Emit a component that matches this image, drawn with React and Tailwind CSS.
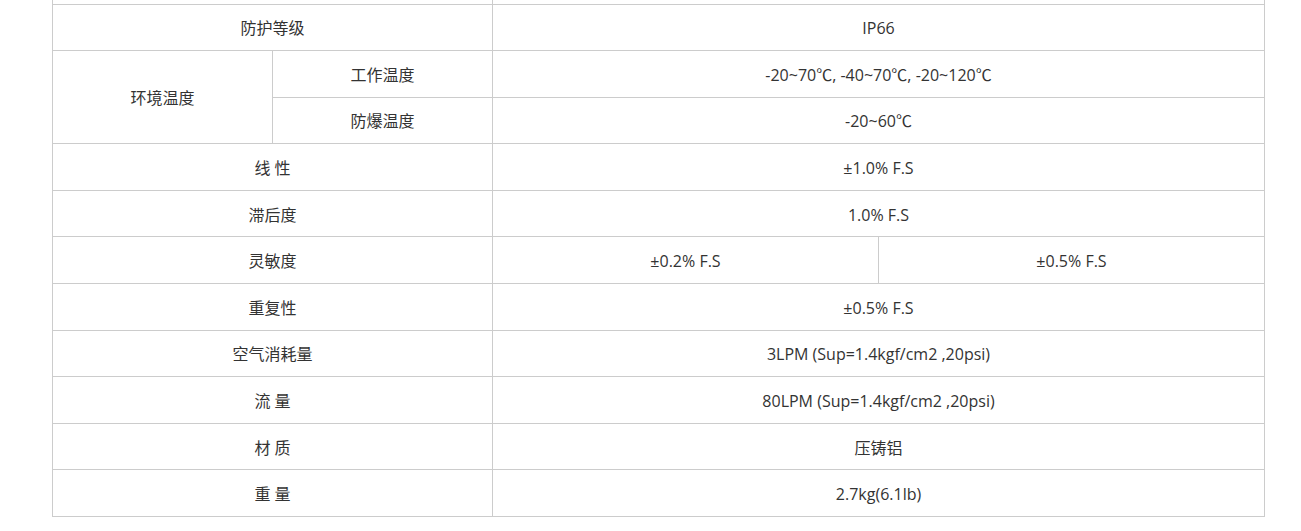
import React from 'react';

// spec rows below the top partial row
const rows = [
  { label: '防护等级', value: 'IP66' },
  { label: '线 性', value: '±1.0% F.S' },
  { label: '滞后度', value: '1.0% F.S' },
  { label: '灵敏度', split: ['±0.2% F.S', '±0.5% F.S'] },
  { label: '重复性', value: '±0.5% F.S' },
  { label: '空气消耗量', value: '3LPM (Sup=1.4kgf/cm2 ,20psi)' },
  { label: '流 量', value: '80LPM (Sup=1.4kgf/cm2 ,20psi)' },
  { label: '材 质', value: '压铸铝' },
  { label: '重 量', value: '2.7kg(6.1lb)' },
];

const cell = 'border border-[#cccccc] text-center align-middle pt-[2px]';

const App = () => {
  const first = rows[0];
  const rest = rows.slice(1);

  return (
    <div
      className="w-[1301px] h-[531px] bg-white overflow-hidden text-[#333333] text-[16px]"
      style={{ fontFamily: '"Open Sans", "Noto Sans CJK SC", sans-serif' }}
    >
      <table className="ml-[52px] w-[1213px] table-fixed border-collapse">
        <colgroup>
          <col className="w-[220px]" />
          <col className="w-[220px]" />
          <col className="w-[386px]" />
          <col className="w-[386px]" />
        </colgroup>
        <tbody>
          {/* partial row cut off at the top */}
          <tr className="h-[4px]">
            <td colSpan={2} className="border-x border-b border-[#cccccc] p-0" />
            <td colSpan={2} className="border-x border-b border-[#cccccc] p-0" />
          </tr>
          <tr className="h-[46.6px]">
            <td colSpan={2} className={cell}>{first.label}</td>
            <td colSpan={2} className={cell}>{first.value}</td>
          </tr>
          <tr className="h-[46.6px]">
            <td rowSpan={2} className={cell}>环境温度</td>
            <td className={cell}>工作温度</td>
            <td colSpan={2} className={cell}>-20~70℃, -40~70℃, -20~120℃</td>
          </tr>
          <tr className="h-[46.6px]">
            <td className={cell}>防爆温度</td>
            <td colSpan={2} className={cell}>-20~60℃</td>
          </tr>
          {rest.map((r, i) => (
            <tr key={i} className="h-[46.6px]">
              <td colSpan={2} className={cell}>{r.label}</td>
              {r.split ? (
                <>
                  <td className={cell}>{r.split[0]}</td>
                  <td className={cell}>{r.split[1]}</td>
                </>
              ) : (
                <td colSpan={2} className={cell}>{r.value}</td>
              )}
            </tr>
          ))}
        </tbody>
      </table>
    </div>
  );
};

export default App;
